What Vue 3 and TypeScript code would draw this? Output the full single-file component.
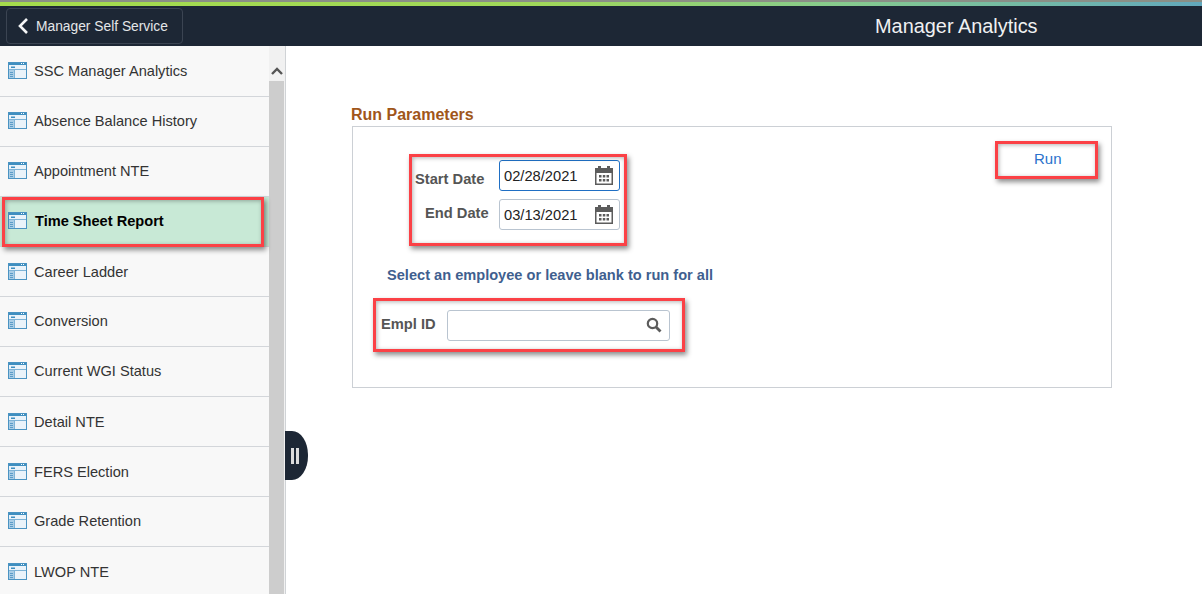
<script setup lang="ts">
const items: string[] = [
  'SSC Manager Analytics',
  'Absence Balance History',
  'Appointment NTE',
  'Time Sheet Report',
  'Career Ladder',
  'Conversion',
  'Current WGI Status',
  'Detail NTE',
  'FERS Election',
  'Grade Retention',
  'LWOP NTE',
]
</script>

<template>
  <div class="page">
    <div class="topline"></div>
    <header class="header">
      <button class="back">
        <svg width="12" height="18" viewBox="0 0 12 18"><path d="M10 2 3 9l7 7" fill="none" stroke="#f4f5f6" stroke-width="2.6" /></svg>
        <span>Manager Self Service</span>
      </button>
      <h1 class="title">Manager Analytics</h1>
    </header>
    <div class="body">
      <aside class="side">
        <ul class="list">
          <li v-for="item in items" :key="item" class="row" :class="{ active: item === 'Time Sheet Report' }">
            <svg class="wicon" width="19" height="17" viewBox="0 0 19 17">
              <rect x="0" y="0" width="19" height="17" fill="#eaf3fa" />
              <rect x="0" y="7" width="6" height="10" fill="#a9cde6" />
              <rect x="0" y="0" width="19" height="3" fill="#3f8fc0" />
              <rect x="0" y="7" width="19" height="1" fill="#7db3d6" />
              <rect x="6" y="7" width="1" height="10" fill="#7db3d6" />
              <rect x="0.500" y="0.500" width="18" height="16" fill="none" stroke="#4a93c2" />
              <rect x="3" y="4.500" width="4" height="1.500" fill="#3f8fc0" />
              <rect x="13" y="1" width="1" height="1" fill="#fff" />
              <rect x="15" y="1" width="1" height="1" fill="#fff" />
              <rect x="2" y="10" width="3" height="1" fill="#5a9cc8" />
              <rect x="2" y="12" width="3" height="1" fill="#5a9cc8" />
              <rect x="2" y="14" width="3" height="1" fill="#5a9cc8" />
            </svg>
            <span>{{ item }}</span>
          </li>
        </ul>
        <div class="scroll">
          <div class="arrow">
            <svg width="12" height="8" viewBox="0 0 12 8"><path d="M1 7 6 2l5 5" fill="none" stroke="#555" stroke-width="2.4" /></svg>
          </div>
          <div class="thumb"></div>
        </div>
      </aside>
      <main class="main">
        <h2 class="section">Run Parameters</h2>
        <section class="box">
          <div class="dates">
            <div class="field">
              <label class="label start">Start Date</label>
              <div class="input focus">
                <span>02/28/2021</span>
                <svg width="18" height="19" viewBox="0 0 18 19"><path fill-rule="evenodd" fill="#5c5c5c" d="M0 2h3V0h3v2h6V0h3v2h3v17H0zM1.500 7v10.500h15V7z" /><path fill="#5c5c5c" d="M4 9h2.500v2.500H4zM7.800 9h2.500v2.500H7.800zM11.500 9H14v2.500h-2.500zM4 13h2.500v2.500H4zM7.800 13h2.500v2.500H7.800zM11.500 13H14v2.500h-2.500z" /></svg>
              </div>
            </div>
            <div class="field">
              <label class="label end">End Date</label>
              <div class="input">
                <span>03/13/2021</span>
                <svg width="18" height="19" viewBox="0 0 18 19"><path fill-rule="evenodd" fill="#5c5c5c" d="M0 2h3V0h3v2h6V0h3v2h3v17H0zM1.500 7v10.500h15V7z" /><path fill="#5c5c5c" d="M4 9h2.500v2.500H4zM7.800 9h2.500v2.500H7.800zM11.500 9H14v2.500h-2.500zM4 13h2.500v2.500H4zM7.800 13h2.500v2.500H7.800zM11.500 13H14v2.500h-2.500z" /></svg>
              </div>
            </div>
          </div>
          <a class="run">Run</a>
          <p class="hint">Select an employee or leave blank to run for all</p>
          <div class="empl">
            <label class="label">Empl ID</label>
            <div class="input search">
              <svg width="16" height="16" viewBox="0 0 16 16"><circle cx="6.500" cy="6.500" r="4.700" fill="none" stroke="#5c5c5c" stroke-width="2.200" /><path d="m10 10 4.500 4.500" stroke="#5c5c5c" stroke-width="2.800" /></svg>
            </div>
          </div>
        </section>
      </main>
      <div class="handle"><i></i><i></i></div>
    </div>

    <div class="mark mark-side"></div>
    <div class="mark mark-dates"></div>
    <div class="mark mark-run"></div>
    <div class="mark mark-empl"></div>
  </div>
</template>

<style>
html, body { margin: 0; background: #fff; overflow: hidden; }
</style>

<style scoped>
.page {
  position: relative;
  width: 1202px;
  height: 594px;
  overflow: hidden;
  font-family: "Liberation Sans", Arial, sans-serif;
  background: #fff;
}
.topline {
  height: 6px;
  box-sizing: border-box;
  border-top: 2px solid #8a8f86;
  background: linear-gradient(90deg, #a5dc4c 0%, #a0d85a 45%, #86cb8e 70%, #62a8bc 100%);
}
.header {
  height: 40px;
  background: #1d2735;
  display: flex;
  align-items: center;
  position: relative;
}
.back {
  margin-left: 6px;
  width: 177px;
  height: 36px;
  box-sizing: border-box;
  border: 1px solid #3b4452;
  border-radius: 4px;
  background: transparent;
  color: #e4e6e8;
  font: 13.800px "Liberation Sans", Arial, sans-serif;
  display: flex;
  align-items: center;
  gap: 7px;
  padding: 0 0 0 10px;
}
.title {
  position: absolute;
  left: 875px;
  top: 8px;
  margin: 0;
  font-size: 19.900px;
  line-height: 24px;
  font-weight: 400;
  color: #f0f1f2;
}
.body {
  display: flex;
  height: 548px;
  position: relative;
}
.side {
  width: 286px;
  flex: none;
  display: flex;
  box-sizing: border-box;
  border-right: 1px solid #d0d3d6;
  overflow: hidden;
}
.list {
  list-style: none;
  margin: 0;
  padding: 1px 0 0;
  width: 269px;
  flex: none;
  background: #f8f8f8;
}
.row {
  height: 50px;
  box-sizing: border-box;
  border-bottom: 1px solid #d3d6da;
  display: flex;
  align-items: center;
  padding: 0 0 2px 8px;
  gap: 7px;
  font-size: 14.600px;
  color: #333;
}
.row:nth-child(5),
.row:nth-child(8),
.row:nth-child(9),
.row:nth-child(11) {
  padding-bottom: 0;
}
.row.active {
  background: #c8e9d6;
  color: #000;
  font-weight: 700;
  gap: 8px;
}
.wicon { flex: none; }
.scroll {
  width: 16px;
  flex: none;
  background: #f1f1f1;
}
.arrow {
  height: 35px;
  display: flex;
  align-items: center;
  justify-content: center;
  padding-top: 14px;
  box-sizing: border-box;
}
.thumb {
  width: 15px;
  height: 513px;
  background: #cdcdcd;
}
.main {
  flex: 1;
  padding: 60px 0 0 65px;
}
.section {
  margin: 0 0 3px;
  font-size: 16px;
  line-height: 17px;
  font-weight: 700;
  color: #a0561a;
}
.box {
  position: relative;
  margin-left: 1px;
  width: 760px;
  height: 262px;
  box-sizing: border-box;
  border: 1px solid #ccd0d5;
  padding: 33px 0 0 0;
}
.dates {
  display: flex;
  flex-direction: column;
  gap: 8px;
}
.field {
  display: flex;
  height: 31px;
  padding-left: 62px;
}
.label {
  font-size: 14.700px;
  line-height: 17px;
  font-weight: 700;
  color: #555;
  white-space: nowrap;
}
.label.start {
  width: 84px;
  margin-top: 11px;
}
.label.end {
  width: 74px;
  margin: 6px 0 0 10px;
}
.input {
  width: 121px;
  height: 31px;
  box-sizing: border-box;
  border: 1px solid #b9c4d0;
  border-radius: 3px;
  background: #fff;
  display: flex;
  align-items: center;
  justify-content: space-between;
  padding: 0 6px 0 4px;
  font-size: 14.700px;
  color: #222;
}
.input.focus { border-color: #1f6fc4; }
.run {
  position: absolute;
  left: 681px;
  top: 23px;
  font-size: 15px;
  line-height: 17px;
  color: #2a72cc;
}
.hint {
  margin: 37px 0 0 34px;
  font-size: 14.600px;
  line-height: 17px;
  font-weight: 700;
  color: #3f5f8f;
}
.empl {
  display: flex;
  align-items: center;
  margin: 26px 0 0 28px;
  gap: 11px;
}
.empl .label {
  width: 55px;
  margin-bottom: 3px;
}
.input.search {
  width: 223px;
  justify-content: flex-end;
  padding: 0 7px 2px 4px;
}
.handle {
  position: absolute;
  left: 285px;
  top: 385px;
  width: 23px;
  height: 49px;
  background: #1d2735;
  border-radius: 0 16px 16px 0 / 0 24px 24px 0;
  display: flex;
  align-items: center;
  justify-content: center;
  gap: 2px;
  padding-right: 4px;
  box-sizing: border-box;
}
.handle i {
  width: 3px;
  height: 16px;
  background: #dcdcdc;
}
.mark {
  position: absolute;
  box-sizing: border-box;
  border: 3px solid #fb4146;
  box-shadow: 2px 3px 5px rgba(0, 0, 0, 0.45), inset 1px 1px 4px rgba(0, 0, 0, 0.3);
  pointer-events: none;
}
.mark-side { left: 2px; top: 197px; width: 262px; height: 50px; }
.mark-dates { left: 409px; top: 154px; width: 218px; height: 92px; }
.mark-run { left: 995px; top: 141px; width: 103px; height: 38px; }
.mark-empl { left: 373px; top: 298px; width: 312px; height: 54px; }
</style>
